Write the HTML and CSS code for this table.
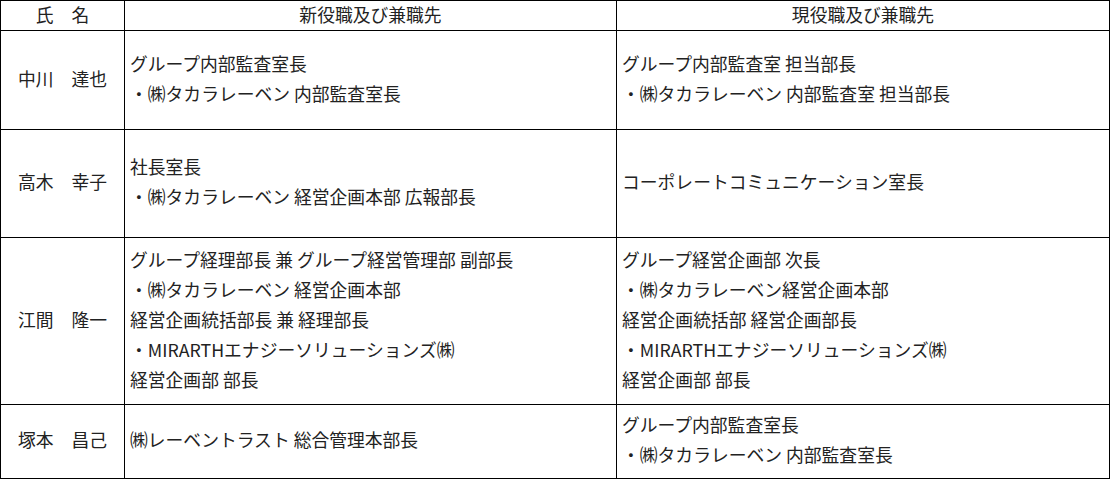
FILE: index.html
```html
<!DOCTYPE html>
<html lang="ja">
<head>
<meta charset="utf-8">
<link rel="stylesheet" href="styles.css">
</head>
<body>
<table class="roster">
  <colgroup>
    <col class="c-name">
    <col class="c-new">
    <col class="c-cur">
  </colgroup>
  <thead>
    <tr class="r-head">
      <th>氏　名</th>
      <th>新役職及び兼職先</th>
      <th>現役職及び兼職先</th>
    </tr>
  </thead>
  <tbody>
    <tr class="r1">
      <td class="name">中川　達也</td>
      <td>グループ内部監査室長<br>・㈱タカラレーベン 内部監査室長</td>
      <td>グループ内部監査室 担当部長<br>・㈱タカラレーベン 内部監査室 担当部長</td>
    </tr>
    <tr class="r2">
      <td class="name">高木　幸子</td>
      <td>社長室長<br>・㈱タカラレーベン 経営企画本部 広報部長</td>
      <td>コーポレートコミュニケーション室長</td>
    </tr>
    <tr class="r3">
      <td class="name">江間　隆一</td>
      <td>グループ経理部長 兼 グループ経営管理部 副部長<br>・㈱タカラレーベン 経営企画本部<br>経営企画統括部長 兼 経理部長<br>・MIRARTHエナジーソリューションズ㈱<br>経営企画部 部長</td>
      <td>グループ経営企画部 次長<br>・㈱タカラレーベン経営企画本部<br>経営企画統括部 経営企画部長<br>・MIRARTHエナジーソリューションズ㈱<br>経営企画部 部長</td>
    </tr>
    <tr class="r4">
      <td class="name">塚本　昌己</td>
      <td>㈱レーベントラスト 総合管理本部長</td>
      <td>グループ内部監査室長<br>・㈱タカラレーベン 内部監査室長</td>
    </tr>
  </tbody>
</table>
</body>
</html>
```

FILE: styles.css
```css
html, body {
  margin: 0;
  padding: 0;
  background: #ffffff;
}

.roster {
  border-collapse: collapse;
  table-layout: fixed;
  width: 1109px;
  font-family: "Noto Sans CJK JP", "Noto Sans", sans-serif;
  font-size: 17.8px;
  line-height: 30px;
  color: #222222;
}

.c-name { width: 124px; }
.c-new { width: 492px; }
.c-cur { width: 493px; }

.roster th,
.roster td {
  border: 1px solid #000000;
  padding: 0 5px 5px;
  vertical-align: middle;
  text-align: left;
  white-space: nowrap;
}

.roster th {
  font-weight: normal;
  text-align: center;
  line-height: 26px;
  padding-bottom: 3px;
}

.roster td.name {
  text-align: center;
  padding-left: 0;
  padding-right: 0;
}

.r-head { height: 30px; }
.r1 { height: 99px; }
.r2 { height: 108px; }
.r3 { height: 167px; }
.r4 { height: 74px; }
```
